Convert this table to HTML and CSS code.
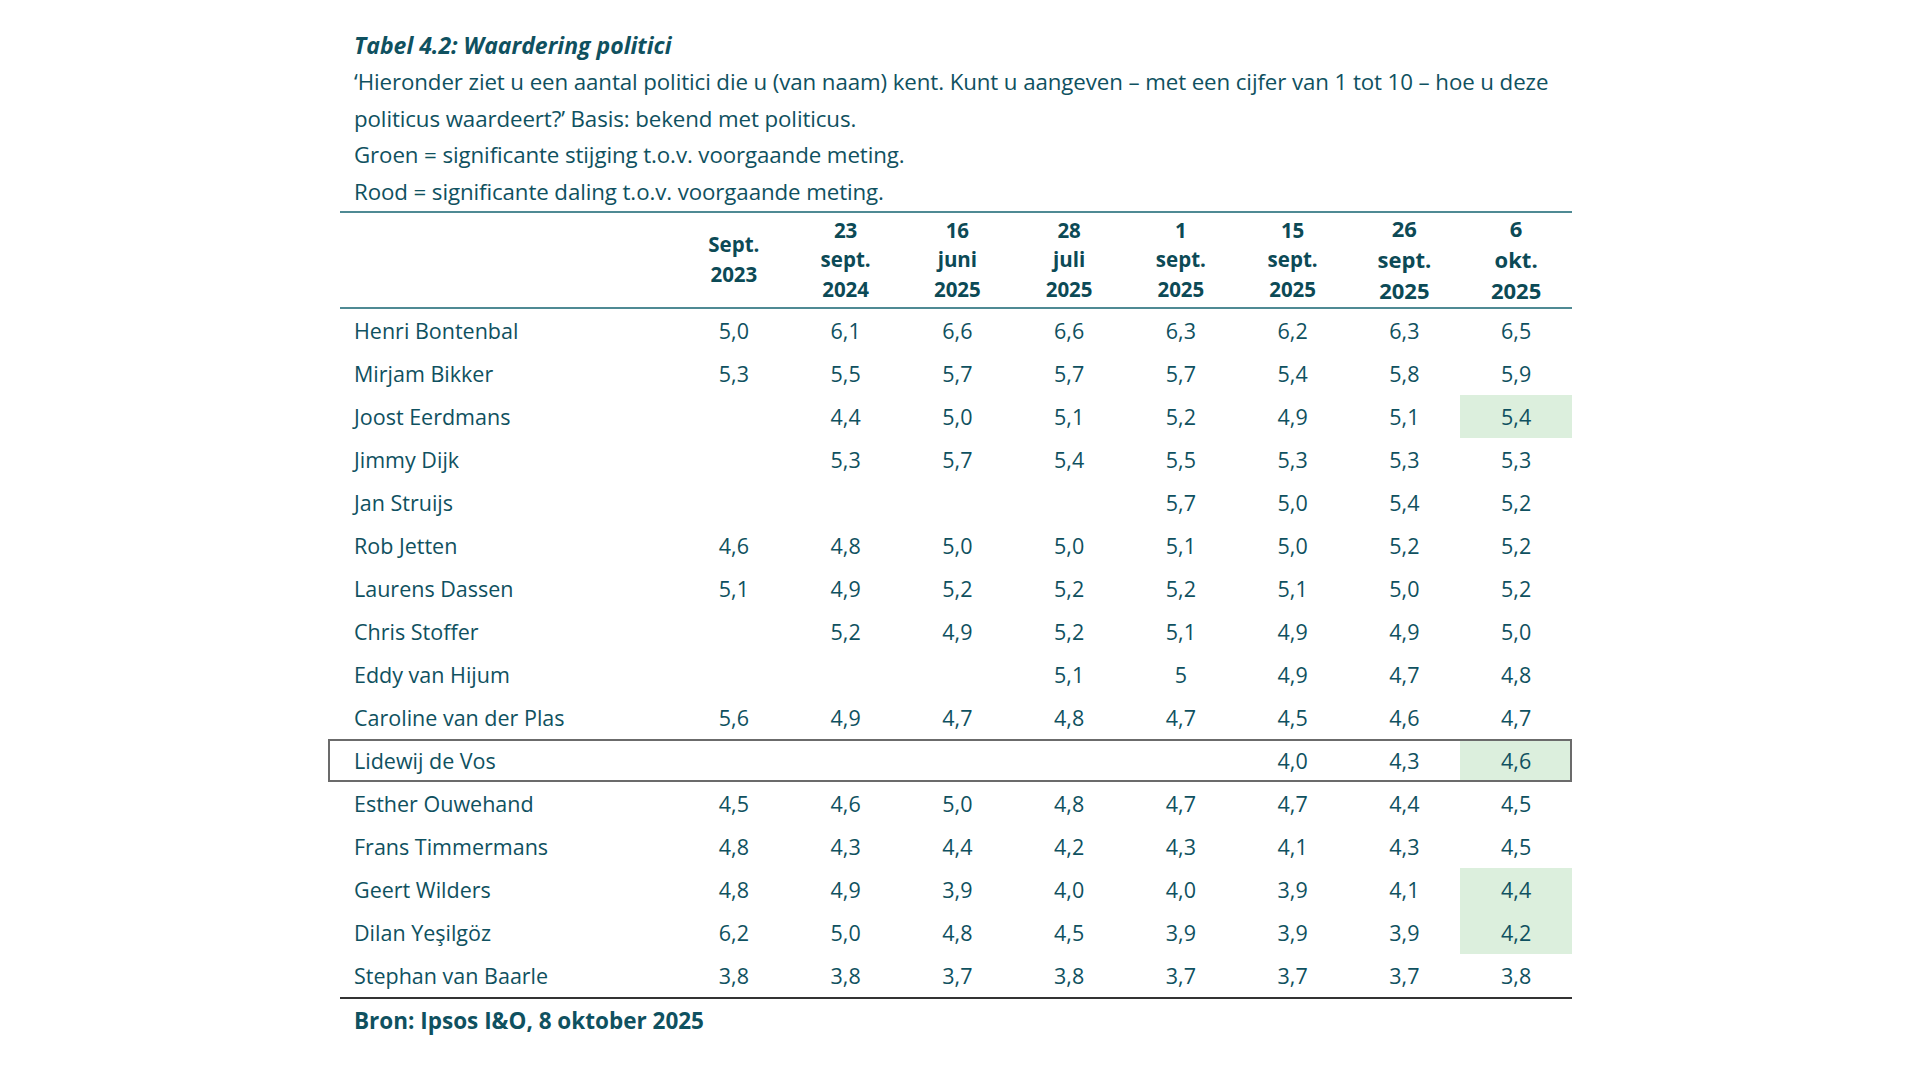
FILE: index.html
```html
<!DOCTYPE html>
<html lang="nl">
<head>
<meta charset="utf-8">
<title>Tabel 4.2: Waardering politici</title>
<link rel="stylesheet" href="styles.css">
</head>
<body>
<div class="page">
  <div class="intro">
    <p class="title">Tabel 4.2: Waardering politici</p>
    <p>‘Hieronder ziet u een aantal politici die u (van naam) kent. Kunt u aangeven – met een cijfer van 1 tot 10 – hoe u deze politicus waardeert?’ Basis: bekend met politicus.</p>
    <p>Groen = significante stijging t.o.v. voorgaande meting.</p>
    <p>Rood = significante daling t.o.v. voorgaande meting.</p>
  </div>
  <table class="tbl">
    <colgroup>
      <col class="c-name">
      <col class="c-val"><col class="c-val"><col class="c-val"><col class="c-val">
      <col class="c-val"><col class="c-val"><col class="c-val"><col class="c-val">
    </colgroup>
    <thead>
      <tr>
        <th></th>
        <th>Sept.<br>2023</th>
        <th>23<br>sept.<br>2024</th>
        <th>16<br>juni<br>2025</th>
        <th>28<br>juli<br>2025</th>
        <th>1<br>sept.<br>2025</th>
        <th>15<br>sept.<br>2025</th>
        <th class="big">26<br>sept.<br>2025</th>
        <th class="big">6<br>okt.<br>2025</th>
      </tr>
    </thead>
    <tbody>
      <tr><td>Henri Bontenbal</td><td>5,0</td><td>6,1</td><td>6,6</td><td>6,6</td><td>6,3</td><td>6,2</td><td>6,3</td><td>6,5</td></tr>
      <tr><td>Mirjam Bikker</td><td>5,3</td><td>5,5</td><td>5,7</td><td>5,7</td><td>5,7</td><td>5,4</td><td>5,8</td><td>5,9</td></tr>
      <tr><td>Joost Eerdmans</td><td></td><td>4,4</td><td>5,0</td><td>5,1</td><td>5,2</td><td>4,9</td><td>5,1</td><td class="up">5,4</td></tr>
      <tr><td>Jimmy Dijk</td><td></td><td>5,3</td><td>5,7</td><td>5,4</td><td>5,5</td><td>5,3</td><td>5,3</td><td>5,3</td></tr>
      <tr><td>Jan Struijs</td><td></td><td></td><td></td><td></td><td>5,7</td><td>5,0</td><td>5,4</td><td>5,2</td></tr>
      <tr><td>Rob Jetten</td><td>4,6</td><td>4,8</td><td>5,0</td><td>5,0</td><td>5,1</td><td>5,0</td><td>5,2</td><td>5,2</td></tr>
      <tr><td>Laurens Dassen</td><td>5,1</td><td>4,9</td><td>5,2</td><td>5,2</td><td>5,2</td><td>5,1</td><td>5,0</td><td>5,2</td></tr>
      <tr><td>Chris Stoffer</td><td></td><td>5,2</td><td>4,9</td><td>5,2</td><td>5,1</td><td>4,9</td><td>4,9</td><td>5,0</td></tr>
      <tr><td>Eddy van Hijum</td><td></td><td></td><td></td><td>5,1</td><td>5</td><td>4,9</td><td>4,7</td><td>4,8</td></tr>
      <tr><td>Caroline van der Plas</td><td>5,6</td><td>4,9</td><td>4,7</td><td>4,8</td><td>4,7</td><td>4,5</td><td>4,6</td><td>4,7</td></tr>
      <tr class="boxed"><td>Lidewij de Vos</td><td></td><td></td><td></td><td></td><td></td><td>4,0</td><td>4,3</td><td class="up">4,6</td></tr>
      <tr><td>Esther Ouwehand</td><td>4,5</td><td>4,6</td><td>5,0</td><td>4,8</td><td>4,7</td><td>4,7</td><td>4,4</td><td>4,5</td></tr>
      <tr><td>Frans Timmermans</td><td>4,8</td><td>4,3</td><td>4,4</td><td>4,2</td><td>4,3</td><td>4,1</td><td>4,3</td><td>4,5</td></tr>
      <tr><td>Geert Wilders</td><td>4,8</td><td>4,9</td><td>3,9</td><td>4,0</td><td>4,0</td><td>3,9</td><td>4,1</td><td class="up">4,4</td></tr>
      <tr><td>Dilan Yeşilgöz</td><td>6,2</td><td>5,0</td><td>4,8</td><td>4,5</td><td>3,9</td><td>3,9</td><td>3,9</td><td class="up">4,2</td></tr>
      <tr class="last"><td>Stephan van Baarle</td><td>3,8</td><td>3,8</td><td>3,7</td><td>3,8</td><td>3,7</td><td>3,7</td><td>3,7</td><td>3,8</td></tr>
    </tbody>
  </table>
  <p class="source">Bron: Ipsos I&amp;O, 8 oktober 2025</p>
</div>
</body>
</html>
```
FILE: styles.css
```css
html, body {
  margin: 0;
  padding: 0;
  background: #ffffff;
}

body {
  font-family: "Open Sans", "Liberation Sans", sans-serif;
  color: #0f5160;
}

.page {
  width: 1232px;
  padding: 27px 0 0 340px;
}

.intro {
  padding-left: 14px;
}

.intro p {
  margin: 0;
  font-size: 22.3px;
  line-height: 36.7px;
  letter-spacing: -0.1px;
}

.intro .title {
  font-size: 23px;
  font-weight: 700;
  font-style: italic;
  line-height: 37px;
  letter-spacing: 0;
}

.tbl {
  width: 1232px;
  border-collapse: collapse;
  table-layout: fixed;
  margin-top: 0;
}

.c-name { width: 338px; }
.c-val { width: 111.75px; }

.tbl thead tr {
  border-top: 2px solid #4f8a94;
  border-bottom: 2px solid #4f8a94;
}

.tbl th {
  height: 94px;
  padding: 0;
  font-size: 20.5px;
  line-height: 29.5px;
  font-weight: 700;
  text-align: center;
  vertical-align: middle;
  color: #0c4a56;
}

.tbl th.big {
  font-size: 22px;
  line-height: 31px;
}

.tbl td {
  height: 43px;
  padding: 0;
  font-size: 21.5px;
  text-align: center;
  vertical-align: middle;
}

.tbl td:first-child {
  position: relative;
  text-align: left;
  padding-left: 14px;
}

.tbl td.up {
  background: #dcefdd;
}

.tbl tr.boxed td:first-child::before {
  content: "";
  position: absolute;
  left: -12px;
  top: 0;
  bottom: 0;
  width: 1244px;
  border: 2px solid #6b6b6b;
  box-sizing: border-box;
  pointer-events: none;
  z-index: 1;
}

.tbl tr.last {
  border-bottom: 2px solid #333333;
}

.source {
  margin: 6px 0 0 14px;
  font-size: 22.5px;
  font-weight: 700;
}
```
